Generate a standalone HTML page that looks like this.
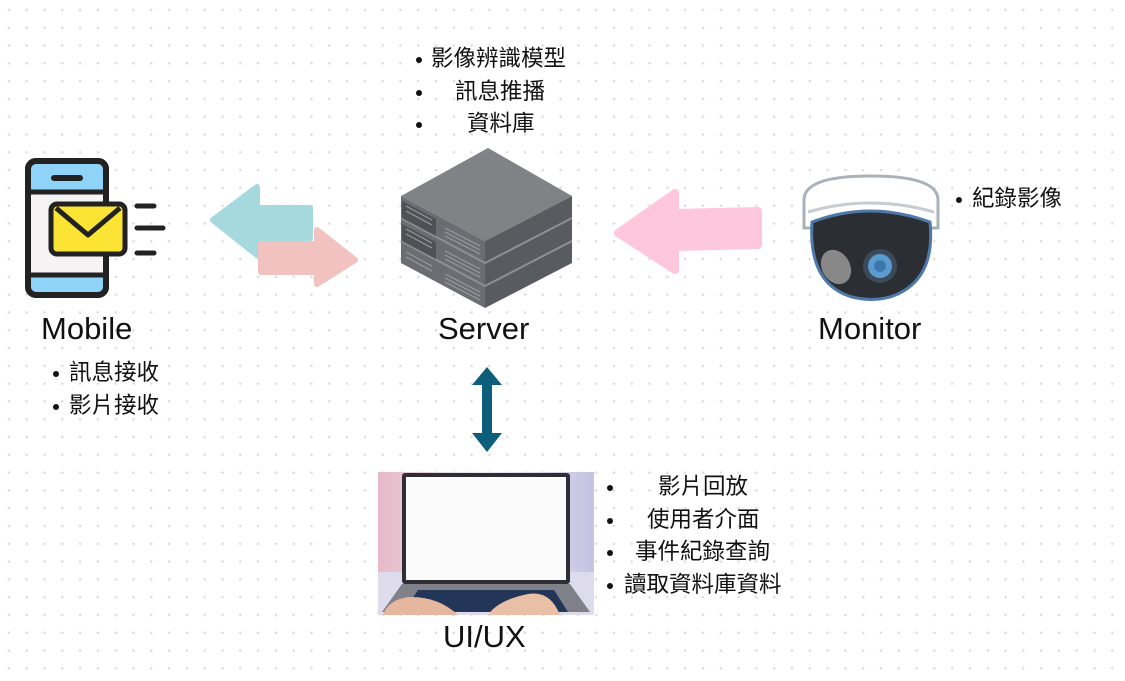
<!DOCTYPE html>
<html><head><meta charset="utf-8"><style>
*{margin:0;padding:0}
body{width:1125px;height:681px;position:relative;overflow:hidden;background:#fff;
background-image:radial-gradient(circle,#dcdde2 1.1px,transparent 1.5px);background-size:17.8px 17.8px;background-position:0px 1px;
font-family:"Liberation Sans","Noto Sans CJK TC",sans-serif;color:#111}
.a{position:absolute}
.lbl{position:absolute;font-size:31px;color:#111}
ul{position:absolute;list-style:none;font-size:22.5px;line-height:32.7px}
li{position:relative;padding-left:14px}
li:before{content:"";position:absolute;left:0;top:14px;width:6px;height:6px;border-radius:50%;background:#111}
</style></head><body>

<ul style="left:416px;top:43px"><li style="padding-left:15px">影像辨識模型</li><li style="padding-left:39px">訊息推播</li><li style="padding-left:51px">資料庫</li></ul>
<ul style="left:956px;top:183px"><li style="padding-left:16px">紀錄影像</li></ul>
<ul style="left:53px;top:357px"><li style="padding-left:16px">訊息接收</li><li style="padding-left:16px">影片接收</li></ul>
<ul style="left:607px;top:471px"><li style="padding-left:51px">影片回放</li><li style="padding-left:40px">使用者介面</li><li style="padding-left:28px">事件紀錄查詢</li><li style="padding-left:17px">讀取資料庫資料</li></ul>

<div class="lbl" style="left:41px;top:311px">Mobile</div>
<div class="lbl" style="left:438px;top:311px">Server</div>
<div class="lbl" style="left:818px;top:311px">Monitor</div>
<div class="lbl" style="left:443px;top:619px">UI/UX</div>

<!-- phone -->
<svg class="a" style="left:24px;top:158px" width="145" height="142" viewBox="0 0 145 142">
<rect x="4" y="3" width="78" height="134" rx="8" fill="#f5f3f4" stroke="#222" stroke-width="6"/>
<rect x="7" y="6" width="72" height="28" fill="#8fd3f8"/><rect x="7" y="117" width="72" height="17" fill="#8fd3f8"/>
<line x1="7" y1="34" x2="79" y2="34" stroke="#222" stroke-width="5"/><line x1="7" y1="117" x2="79" y2="117" stroke="#222" stroke-width="5"/>
<rect x="4" y="3" width="78" height="134" rx="8" fill="none" stroke="#222" stroke-width="6"/>
<line x1="30" y1="20" x2="56" y2="20" stroke="#222" stroke-width="6" stroke-linecap="round"/>
<rect x="27" y="46" width="74" height="50" rx="6" fill="#fbe433" stroke="#222" stroke-width="5"/>
<path d="M32 50 L64 77 L96 50" fill="none" stroke="#222" stroke-width="5" stroke-linejoin="round"/>
<g stroke="#222" stroke-width="5" stroke-linecap="round"><line x1="113" y1="48" x2="130" y2="48"/><line x1="113" y1="70" x2="139" y2="70"/><line x1="113" y1="95" x2="130" y2="95"/></g>
</svg>

<!-- arrows -->
<svg class="a" style="left:205px;top:180px" width="160" height="110">
<path d="M52 7 L8 40 L52 75 L52 58 L105 58 L105 28 L52 28Z" fill="#a5d9de" stroke="#a5d9de" stroke-width="6" stroke-linejoin="round"/>
<path d="M112 50 L150 80 L112 104 L112 92 L56 92 L56 64 L112 64Z" fill="#f2c2c1" stroke="#f2c2c1" stroke-width="6" stroke-linejoin="round"/>
</svg>
<svg class="a" style="left:610px;top:185px" width="155" height="90">
<path d="M65 8 L8 48 L65 85 L65 62 L148 60 L148 26 L65 28Z" fill="#fec7dc" stroke="#fec7dc" stroke-width="8" stroke-linejoin="round"/>
</svg>
<svg class="a" style="left:467px;top:365px" width="40" height="90">
<path d="M20 2 L35 20 L25 20 L25 68 L35 68 L20 87 L5 68 L15 68 L15 20 L5 20Z" fill="#0d5e7b"/>
</svg>

<!-- server -->
<svg class="a" style="left:400px;top:146px" width="174" height="164" viewBox="0 0 174 164">
<polygon points="1,50 85,95 85,162 1,117" fill="#6a6d71"/>
<polygon points="85,95 172,50 172,117 85,162" fill="#585b5f"/>
<polygon points="88,2 172,50 85,95 1,50" fill="#818286"/>
<g stroke="#8e9094" stroke-width="2" fill="none">
<path d="M1 72 L85 117 L172 72 M1 95 L85 140 L172 95"/></g>
<g fill="#4e5155">
<path d="M2 55 L36 73 L36 90 L2 72Z M2 78 L36 96 L36 113 L2 95Z"/></g>
<g stroke="#9a9ca0" stroke-width="1">
<path d="M45 82 L80 100 M45 86 L80 104 M45 90 L80 108 M45 105 L80 123 M45 109 L80 127 M45 113 L80 131 M45 128 L80 146 M45 132 L80 150 M45 136 L80 154"/>
<path d="M6 60 L32 74 M6 65 L32 79 M6 83 L32 97 M6 88 L32 102 M6 106 L32 120 M6 111 L32 125"/></g>
</svg>

<!-- camera -->
<svg class="a" style="left:800px;top:172px" width="144" height="132" viewBox="0 0 144 132">
<path d="M4 28 Q4 4 70 4 Q138 4 138 28 L138 56 L4 56Z" fill="#fff" stroke="#a9b1ba" stroke-width="3"/>
<path d="M8 40 Q70 22 134 40" fill="none" stroke="#c6ccd2" stroke-width="3"/>
<path d="M12 50 Q70 28 130 50 Q136 110 90 125 Q72 130 52 125 Q8 112 12 50Z" fill="#2b2f34" stroke="#4f79a8" stroke-width="3"/>
<ellipse cx="36" cy="95" rx="14" ry="18" fill="#888" transform="rotate(-30 36 95)"/>
<circle cx="80" cy="94" r="17" fill="#3c4a59"/><circle cx="80" cy="94" r="12" fill="#5a9bd0"/><circle cx="80" cy="94" r="6" fill="#3f78ac"/>
</svg>

<!-- laptop -->
<svg class="a" style="left:378px;top:472px" width="216" height="143" viewBox="0 0 216 143">
<defs><linearGradient id="g" x1="0" x2="1"><stop offset="0" stop-color="#e8b9c8"/><stop offset=".5" stop-color="#ece9f3"/><stop offset="1" stop-color="#c5c3e2"/></linearGradient></defs>
<rect width="216" height="143" fill="url(#g)"/>
<rect x="0" y="100" width="216" height="43" fill="#dedbec"/>
<rect x="24" y="1" width="168" height="111" rx="3" fill="#2e2e34"/>
<rect x="28" y="5" width="160" height="103" fill="#fbfbfb"/>
<polygon points="24,112 192,112 212,140 4,140" fill="#7f8088"/>
<polygon points="40,118 176,118 190,140 26,140" fill="#24355a"/>
<path d="M5 143 Q10 128 30 125 Q60 124 80 143Z" fill="#e4b79e"/>
<path d="M110 143 Q120 128 150 122 Q172 118 182 143Z" fill="#e9c0a6"/>
</svg>
</body></html>
